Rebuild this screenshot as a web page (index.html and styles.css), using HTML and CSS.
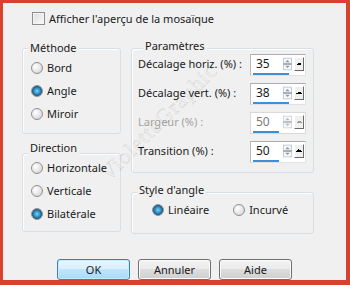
FILE: index.html
```html
<!DOCTYPE html>
<html lang="fr">
  <head>
    <meta charset="UTF-8" />
    <title>Mosaïque - Angle</title>
    <link rel="stylesheet" href="styles.css">
  </head>
  <body>
    <div class="frame">
      <div class="top">
        <span class="check"></span>
        <span>Afficher l'aperçu de la mosaïque</span>
      </div>

      <div class="columns">
        <div class="col-left">
          <div class="group methode">
            <div class="group-title">Méthode</div>
            <div class="radio-row"><span class="radio"></span>Bord</div>
            <div class="radio-row"><span class="radio on"></span>Angle</div>
            <div class="radio-row"><span class="radio"></span>Miroir</div>
          </div>

          <div class="group direction">
            <div class="group-title">Direction</div>
            <div class="radio-row"><span class="radio"></span>Horizontale</div>
            <div class="radio-row"><span class="radio"></span>Verticale</div>
            <div class="radio-row"><span class="radio on"></span>Bilatérale</div>
          </div>
        </div>

        <div class="col-right">
          <div class="group params">
            <div class="group-title">Paramètres</div>

            <div class="param-row">
              <span class="param-label">Décalage horiz. (%) :</span>
              <div class="spin">
                <div class="spin-top">
                  <span class="spin-val">35</span>
                  <svg class="arrows" width="10" height="14" viewBox="0 0 10 14">
                    <rect x="0.5" y="0.5" width="9" height="13" fill="#f7f8fa" stroke="#c3c8d0" />
                    <line x1="0.5" y1="7" x2="9.5" y2="7" stroke="#50555d" />
                    <path d="M2.5 5 L5 2.5 L7.5 5 Z" fill="#8a96ae" />
                    <path d="M2.5 9 L5 11.5 L7.5 9 Z" fill="#8a96ae" />
                  </svg>
                  <span class="drop"></span>
                </div>
                <span class="spin-bar" style="width: 36px"></span>
              </div>
            </div>

            <div class="param-row">
              <span class="param-label">Décalage vert. (%) :</span>
              <div class="spin">
                <div class="spin-top">
                  <span class="spin-val">38</span>
                  <svg class="arrows" width="10" height="14" viewBox="0 0 10 14">
                    <rect x="0.5" y="0.5" width="9" height="13" fill="#f7f8fa" stroke="#c3c8d0" />
                    <line x1="0.5" y1="7" x2="9.5" y2="7" stroke="#50555d" />
                    <path d="M2.5 5 L5 2.5 L7.5 5 Z" fill="#8a96ae" />
                    <path d="M2.5 9 L5 11.5 L7.5 9 Z" fill="#8a96ae" />
                  </svg>
                  <span class="drop"></span>
                </div>
                <span class="spin-bar" style="width: 36px"></span>
              </div>
            </div>

            <div class="param-row disabled">
              <span class="param-label">Largeur (%) :</span>
              <div class="spin">
                <div class="spin-top">
                  <span class="spin-val">50</span>
                  <svg class="arrows" width="10" height="14" viewBox="0 0 10 14">
                    <rect x="0.5" y="0.5" width="9" height="13" fill="#f7f8fa" stroke="#d2d5da" />
                    <line x1="0.5" y1="7" x2="9.5" y2="7" stroke="#7a7e85" />
                    <path d="M2.5 5 L5 2.5 L7.5 5 Z" fill="#b0b7c4" />
                    <path d="M2.5 9 L5 11.5 L7.5 9 Z" fill="#b0b7c4" />
                  </svg>
                  <span class="drop"></span>
                </div>
                <span class="spin-bar" style="width: 26px"></span>
              </div>
            </div>

            <div class="param-row">
              <span class="param-label">Transition (%) :</span>
              <div class="spin">
                <div class="spin-top">
                  <span class="spin-val">50</span>
                  <svg class="arrows" width="10" height="14" viewBox="0 0 10 14">
                    <rect x="0.5" y="0.5" width="9" height="13" fill="#f7f8fa" stroke="#c3c8d0" />
                    <line x1="0.5" y1="7" x2="9.5" y2="7" stroke="#50555d" />
                    <path d="M2.5 5 L5 2.5 L7.5 5 Z" fill="#8a96ae" />
                    <path d="M2.5 9 L5 11.5 L7.5 9 Z" fill="#8a96ae" />
                  </svg>
                  <span class="drop"></span>
                </div>
                <span class="spin-bar" style="width: 26px"></span>
              </div>
            </div>
          </div>

          <div class="group style-angle">
            <div class="group-title">Style d'angle</div>
            <div class="inline-radios">
              <div class="radio-row"><span class="radio on"></span>Linéaire</div>
              <div class="radio-row"><span class="radio"></span>Incurvé</div>
            </div>
          </div>
        </div>
      </div>

      <div class="buttons">
        <button type="button" class="button default">OK</button>
        <button type="button" class="button">Annuler</button>
        <button type="button" class="button">Aide</button>
      </div>

      <div class="watermark">VioletteGraphic</div>
    </div>
  </body>
</html>
```

FILE: styles.css
```css
body {
  margin: 0;
  font-family: "Noto Sans", "Open Sans", sans-serif;
  font-size: 11px;
  color: #1a1a1a;
}

.frame {
  position: relative;
  width: 350px;
  height: 285px;
  box-sizing: border-box;
  border-style: solid;
  border-color: #d8412e;
  border-width: 3px 4px 5px 3px;
  background-color: #f0f0f0;
  overflow: hidden;
}

.top {
  display: flex;
  align-items: center;
  gap: 4px;
  padding: 9px 0 0 29px;
  height: 13px;
  line-height: 16px;
}

.check {
  width: 11px;
  height: 11px;
  border: 1px solid #8e8f8f;
  background: linear-gradient(135deg, #dcdcdc, #fbfbfb);
  box-shadow: inset 0 0 0 1px #f4f4f4;
  flex-shrink: 0;
}

.columns {
  display: flex;
  gap: 10px;
  padding-left: 19px;
  margin-top: 23px;
}

.col-left {
  width: 99px;
}

.col-right {
  width: 183px;
}

.group {
  border: 1px solid #d5dfe5;
  border-radius: 3px;
  box-shadow: inset 1px 1px 0 #fff;
  box-sizing: border-box;
}

.group-title {
  width: fit-content;
  margin: -14px 0 0 5px;
  padding: 0 2px;
  line-height: 16px;
  background-color: #f0f0f0;
}

.radio-row {
  display: flex;
  align-items: center;
  gap: 4px;
  height: 23px;
  padding-left: 8px;
}

.radio {
  width: 10px;
  height: 10px;
  border: 1px solid #8f8f8f;
  border-radius: 50%;
  background: radial-gradient(circle at 35% 35%, #ffffff, #d8d8d8 80%);
  flex-shrink: 0;
}

.radio.on {
  background: radial-gradient(circle, #7fd2f2 0%, #2a8ac0 45%, #1c4f78 70%, #e6e6e6 76%, #f8f8f8 100%);
}

.methode {
  padding: 5px 0 8px;
}

.direction {
  margin-top: 19px;
  padding: 0 0 6px;
}

.params {
  padding: 3px 7px 9px 6px;
}

.param-row {
  display: flex;
  align-items: center;
  justify-content: space-between;
  height: 22px;
  margin-bottom: 7px;
}

.param-row:last-child {
  margin-bottom: 0;
}

.param-label {
  margin-top: -4px;
  white-space: nowrap;
}

.disabled .param-label {
  color: #a3a3a3;
}

.spin {
  width: 56px;
  height: 22px;
  box-sizing: border-box;
  border: 1px solid #e0e3e8;
  border-top-color: #abadb3;
  border-left-color: #b9bcc3;
  background-color: #fff;
  padding: 1px 1px 0 1px;
  display: flex;
  flex-direction: column;
}

.disabled .spin {
  border-color: #d9d9d9;
}

.spin-top {
  display: flex;
  align-items: center;
  height: 15px;
}

.spin-val {
  width: 30px;
  padding-left: 4px;
  line-height: 15px;
  font-size: 12px;
}

.disabled .spin-val {
  color: #7a7a7a;
}

.arrows {
  display: block;
}

.drop {
  width: 9px;
  height: 12px;
  margin-left: 2px;
  border: 1px solid;
  border-color: #fff #6b6b6b #6b6b6b #fff;
  background-color: #f0f0f0;
  background-image: linear-gradient(135deg, transparent 50%, #000 50%), linear-gradient(225deg, transparent 50%, #000 50%);
  background-repeat: no-repeat;
  background-size: 3px 3px, 3px 3px;
  background-position: 1px 4px, 4px 4px;
}

.disabled .drop {
  background-image: linear-gradient(135deg, transparent 50%, #9a9a9a 50%), linear-gradient(225deg, transparent 50%, #9a9a9a 50%);
}

.spin-bar {
  display: block;
  height: 3px;
  margin: 2px 0 0 1px;
  background-color: #3f8fd6;
}

.style-angle {
  margin-top: 19px;
  padding: 3px 0 12px;
}

.inline-radios {
  display: flex;
}

.inline-radios .radio-row {
  padding-left: 20px;
}

.inline-radios .radio-row + .radio-row {
  padding-left: 24px;
}

.buttons {
  display: flex;
  justify-content: center;
  gap: 8px;
  margin-top: 25px;
}

.button {
  width: 73px;
  height: 21px;
  padding: 0;
  font-family: inherit;
  font-size: 11px;
  color: #1a1a1a;
  border: 1px solid #707070;
  border-radius: 3px;
  background: linear-gradient(#f2f2f2 0%, #ebebeb 45%, #dddddd 50%, #cfcfcf 100%);
  box-shadow: inset 0 0 0 1px #fbfbfb;
}

.button.default {
  border-color: #3c7fb1;
  background: linear-gradient(#eaf6fd 0%, #d9f0fc 45%, #bee6fd 50%, #a7d9f5 100%);
  box-shadow: inset 0 0 0 1px #c5ecfd;
}

.watermark {
  position: absolute;
  left: 78px;
  top: 106px;
  font-family: "Liberation Serif", serif;
  font-size: 22px;
  letter-spacing: 1px;
  color: transparent;
  -webkit-text-stroke: 0.6px rgba(0, 0, 0, 0.13);
  transform: rotate(-45deg);
  pointer-events: none;
}
```
